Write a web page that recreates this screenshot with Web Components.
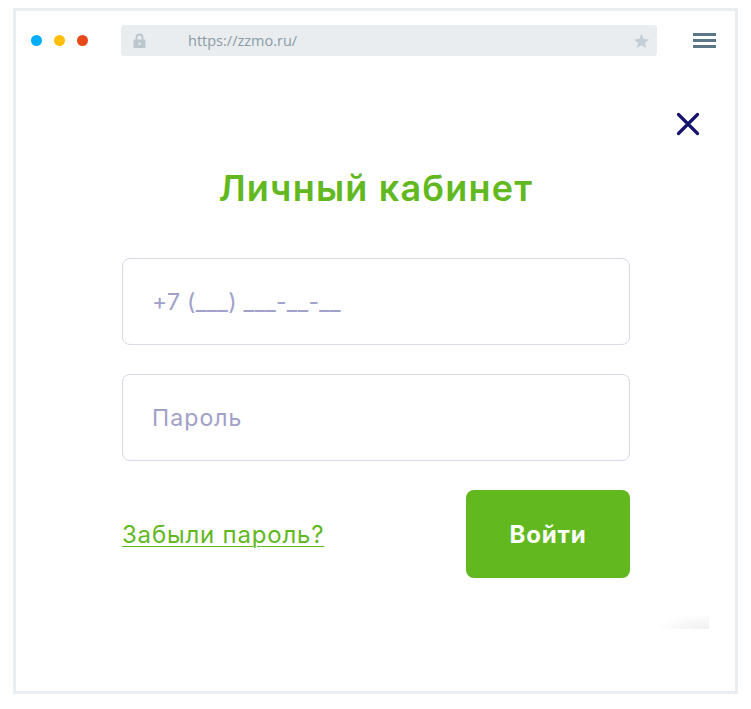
<!DOCTYPE html>
<html lang="ru">
<head>
<meta charset="utf-8">
<title>Личный кабинет</title>
<style>
  html, body { margin: 0; background: #fff; }
  body { font-family: "Inter", "Liberation Sans", sans-serif; }
</style>
</head>
<body>
<browser-frame url="https://zzmo.ru/">
  <login-form></login-form>
</browser-frame>

<script>
const frameTemplate = document.createElement("template");
frameTemplate.innerHTML = `
  <style>
    :host {
      display: block;
      box-sizing: border-box;
      position: relative;
      width: 725px;
      height: 686px;
      margin: 8px 0 15px 13px;
      border: 3px solid #ebeef1;
      background: #fff;
    }
    .bar {
      display: flex;
      align-items: center;
      height: 31px;
      margin-top: 14px;
      padding-left: 15px;
    }
    .dots { display: flex; gap: 12px; width: 90px; }
    .dots i { width: 11px; height: 11px; border-radius: 50%; }
    .address {
      display: flex;
      align-items: center;
      box-sizing: border-box;
      width: 536px;
      height: 31px;
      padding: 0 8px 0 12px;
      background: #e9edf0;
      border-radius: 3px;
    }
    .url {
      flex: 1;
      margin-left: 42px;
      font: 14.500px "Open Sans", sans-serif;
      color: #8b9ba5;
    }
    .menu { display: flex; flex-direction: column; gap: 3px; margin-left: 36px; }
    .menu i { display: block; width: 23px; height: 3px; background: #5b7684; }
    .close { display: flex; justify-content: flex-end; padding: 56px 35px 0 0; }
    svg { display: block; }
    .smudge {
      position: absolute;
      left: 640px;
      top: 604px;
      width: 53px;
      height: 14px;
      background: radial-gradient(ellipse at 100% 100%, #f0f0f0 0, #fff 75%);
    }
  </style>
  <div class="bar">
    <div class="dots">
      <i style="background:#00aeff"></i>
      <i style="background:#ffbe0b"></i>
      <i style="background:#e8491a"></i>
    </div>
    <div class="address">
      <svg width="13" height="15" viewBox="0 0 13 15">
        <path d="M3.500 7V4.500a3 3 0 0 1 6 0V7" fill="none" stroke="#bcc6cd" stroke-width="1.800"/>
        <path fill-rule="evenodd" d="M1.500 6.500h10a1 1 0 0 1 1 1V14a1 1 0 0 1-1 1h-10a1 1 0 0 1-1-1V7.500a1 1 0 0 1 1-1zM6.500 9.500a1.200 1.200 0 1 0 0 2.400a1.200 1.200 0 0 0 0-2.400z" fill="#bcc6cd"/>
      </svg>
      <span class="url"></span>
      <svg width="15" height="14" viewBox="0 0 15 14">
        <path d="M7.500 0l2.200 4.900 5.300.5-4 3.500 1.200 5.100-4.700-2.700-4.700 2.700 1.200-5.100-4-3.500 5.300-.5z" fill="#c3ced5"/>
      </svg>
    </div>
    <div class="menu"><i></i><i></i><i></i></div>
  </div>
  <div class="close">
    <svg width="24" height="24" viewBox="0 0 24 24">
      <path d="M2.500 2.500L21.500 21.500M21.500 2.500L2.500 21.500" stroke="#14146b" stroke-width="3.200" stroke-linecap="round"/>
    </svg>
  </div>
  <slot></slot>
  <div class="smudge"></div>
`;

class BrowserFrame extends HTMLElement {
  constructor() {
    super();
    const root = this.attachShadow({ mode: "open" });
    root.appendChild(frameTemplate.content.cloneNode(true));
    root.querySelector(".url").textContent = this.getAttribute("url");
  }
}

const fieldTemplate = document.createElement("template");
fieldTemplate.innerHTML = `
  <style>
    :host {
      display: flex;
      align-items: center;
      box-sizing: border-box;
      height: 87px;
      padding-left: 29px;
      border: 1px solid #d9d9ea;
      border-radius: 8px;
      font: 23px "Inter", sans-serif;
      color: #a0a0c8;
    }
  </style>
  <slot></slot>
`;

class FormField extends HTMLElement {
  constructor() {
    super();
    this.attachShadow({ mode: "open" }).appendChild(
      fieldTemplate.content.cloneNode(true)
    );
  }
}

const formTemplate = document.createElement("template");
formTemplate.innerHTML = `
  <style>
    :host {
      display: block;
      width: 508px;
      margin: 31px 0 0 106px;
      font-family: "Inter", sans-serif;
    }
    h1 {
      margin: 0 0 49px;
      height: 42px;
      line-height: 42px;
      text-align: center;
      font-size: 36px;
      font-weight: 600;
      letter-spacing: 1.200px;
      color: #62b81f;
    }
    .fields { display: flex; flex-direction: column; gap: 29px; }
    .actions {
      display: flex;
      justify-content: space-between;
      align-items: center;
      margin-top: 29px;
    }
    a {
      font-size: 24px;
      letter-spacing: .8px;
      color: #62b81f;
      text-decoration: underline;
      text-underline-offset: 3px;
      text-decoration-thickness: 1px;
    }
    button {
      width: 164px;
      height: 88px;
      border: none;
      border-radius: 8px;
      background: #62b81f;
      color: #fff;
      font: 700 24px "Inter", sans-serif;
      letter-spacing: .8px;
    }
  </style>
  <h1>Личный кабинет</h1>
  <div class="fields">
    <form-field style="letter-spacing:.3px">+7 (___) ___-__-__</form-field>
    <form-field style="letter-spacing:1.100px">Пароль</form-field>
  </div>
  <div class="actions">
    <a>Забыли пароль?</a>
    <button>Войти</button>
  </div>
`;

class LoginForm extends HTMLElement {
  constructor() {
    super();
    this.attachShadow({ mode: "open" }).appendChild(
      formTemplate.content.cloneNode(true)
    );
  }
}

customElements.define("form-field", FormField);
customElements.define("login-form", LoginForm);
customElements.define("browser-frame", BrowserFrame);
</script>
</body>
</html>
